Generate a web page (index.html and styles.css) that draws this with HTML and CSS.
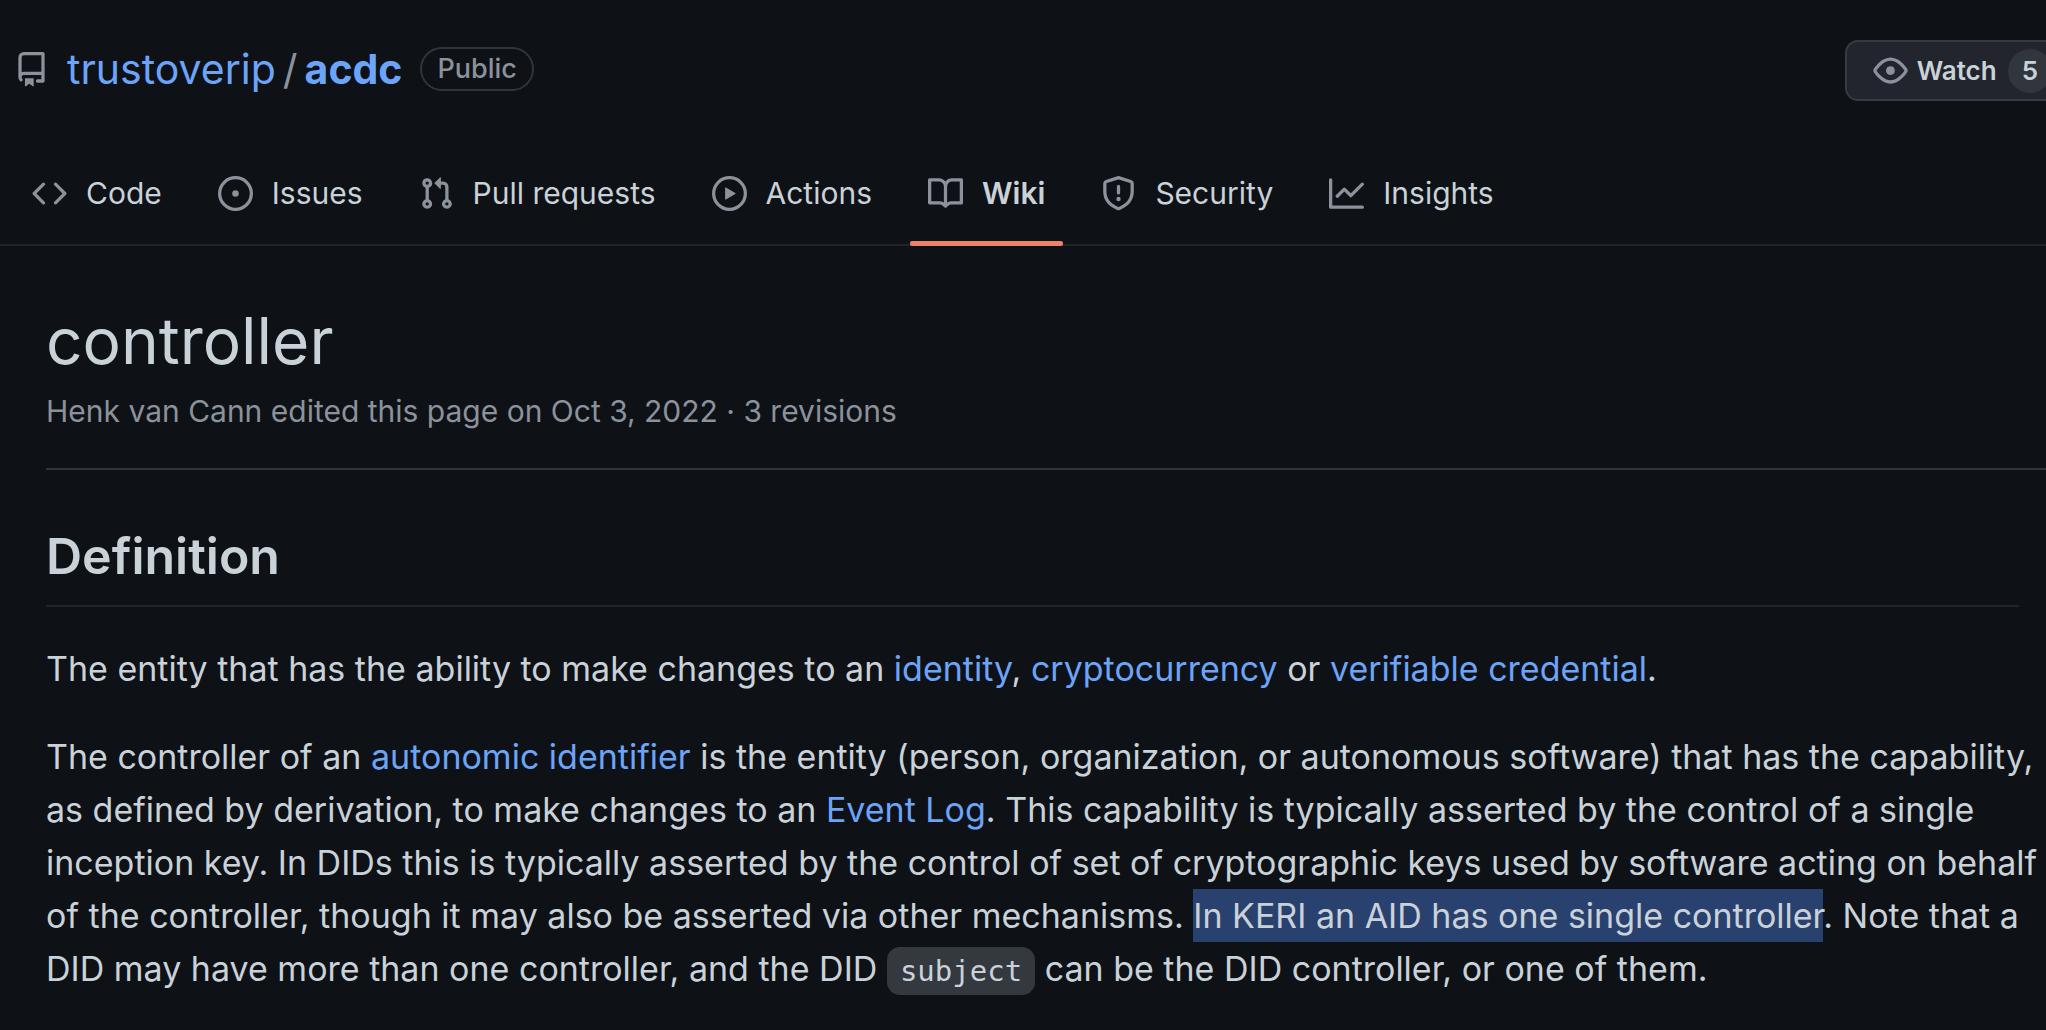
FILE: index.html
```html
<!DOCTYPE html>
<html lang="en">
<head>
<meta charset="utf-8">
<title>controller · trustoverip/acdc Wiki</title>
<link rel="stylesheet" href="styles.css">
</head>
<body>
<header class="repo-header">
  <div class="repo-title">
    <svg class="icon" viewBox="0 0 16 16" aria-hidden="true"><path d="M2 2.5A2.5 2.5 0 0 1 4.500 0h8.750a.75.75 0 0 1 .75.75v12.500a.75.75 0 0 1-.75.75h-2.500a.75.75 0 0 1 0-1.500h1.750v-2h-8a1 1 0 0 0-.714 1.700.75.75 0 1 1-1.072 1.050A2.495 2.495 0 0 1 2 11.500Zm10.500-1h-8a1 1 0 0 0-1 1v6.708A2.486 2.486 0 0 1 4.500 9h8ZM5 12.250a.25.25 0 0 1 .25-.25h3.500a.25.25 0 0 1 .25.25v3.250a.25.25 0 0 1-.4.200l-1.450-1.087a.249.249 0 0 0-.300 0L5.400 15.700a.25.25 0 0 1-.4-.200Z"/></svg>
    <h2 class="repo-name"><a href="#">trustoverip</a><span class="slash">/</span><a class="repo" href="#">acdc</a></h2>
    <span class="label">Public</span>
  </div>
  <button class="watch" type="button">
    <svg class="icon" viewBox="0 0 16 16" aria-hidden="true"><path d="M8 2c1.981 0 3.671.992 4.933 2.078 1.270 1.091 2.187 2.345 2.637 3.023a1.620 1.620 0 0 1 0 1.798c-.45.678-1.367 1.932-2.637 3.023C11.670 13.008 9.981 14 8 14c-1.981 0-3.671-.992-4.933-2.078C1.797 10.830.88 9.576.43 8.898a1.620 1.620 0 0 1 0-1.798c.45-.677 1.367-1.931 2.637-3.022C4.330 2.992 6.019 2 8 2ZM1.679 7.932a.12.12 0 0 0 0 .136c.411.622 1.241 1.750 2.366 2.717C5.176 11.758 6.527 12.500 8 12.500c1.473 0 2.825-.742 3.955-1.715 1.124-.967 1.954-2.096 2.366-2.717a.12.12 0 0 0 0-.136c-.412-.621-1.242-1.750-2.366-2.717C10.824 4.242 9.473 3.500 8 3.500c-1.473 0-2.825.742-3.955 1.715-1.124.967-1.954 2.096-2.366 2.717ZM8 10a2 2 0 1 1-.001-3.999A2 2 0 0 1 8 10Z"/></svg>
    <span>Watch</span>
    <span class="counter">5</span>
  </button>
</header>
<nav class="tabs" aria-label="Repository">
  <a class="tab" href="#"><svg class="icon" viewBox="0 0 16 16" aria-hidden="true"><path d="m11.280 3.220 4.250 4.250a.75.75 0 0 1 0 1.060l-4.250 4.250a.749.749 0 0 1-1.275-.326.749.749 0 0 1 .215-.734L13.940 8l-3.720-3.720a.749.749 0 0 1 .326-1.275.749.749 0 0 1 .734.215Zm-6.560 0a.751.751 0 0 1 1.042.018.751.751 0 0 1 .018 1.042L2.060 8l3.720 3.720a.749.749 0 0 1-.326 1.275.749.749 0 0 1-.734-.215L.47 8.530a.75.75 0 0 1 0-1.060Z"/></svg>Code</a>
  <a class="tab" href="#"><svg class="icon" viewBox="0 0 16 16" aria-hidden="true"><path d="M8 9.500a1.500 1.500 0 1 0 0-3 1.500 1.500 0 0 0 0 3Z"/><path d="M8 0a8 8 0 1 1 0 16A8 8 0 0 1 8 0ZM1.500 8a6.500 6.500 0 1 0 13 0 6.500 6.500 0 0 0-13 0Z"/></svg>Issues</a>
  <a class="tab" href="#"><svg class="icon" viewBox="0 0 16 16" aria-hidden="true"><path d="M1.500 3.250a2.250 2.250 0 1 1 3 2.122v5.256a2.251 2.251 0 1 1-1.500 0V5.372A2.250 2.250 0 0 1 1.500 3.250Zm5.677-.177L9.573.677A.25.25 0 0 1 10 .854V2.500h1A2.500 2.500 0 0 1 13.500 5v5.628a2.251 2.251 0 1 1-1.500 0V5a1 1 0 0 0-1-1h-1v1.646a.25.25 0 0 1-.427.177L7.177 3.427a.25.25 0 0 1 0-.354ZM3.750 2.500a.75.75 0 1 0 0 1.500.75.75 0 0 0 0-1.500Zm0 9.500a.75.75 0 1 0 0 1.500.75.75 0 0 0 0-1.500Zm8.250.75a.75.75 0 1 0 1.500 0 .75.75 0 0 0-1.500 0Z"/></svg>Pull requests</a>
  <a class="tab" href="#"><svg class="icon" viewBox="0 0 16 16" aria-hidden="true"><path d="M8 0a8 8 0 1 1 0 16A8 8 0 0 1 8 0ZM1.500 8a6.500 6.500 0 1 0 13 0 6.500 6.500 0 0 0-13 0Zm4.879-2.773 4.264 2.559a.25.25 0 0 1 0 .428l-4.264 2.559A.25.25 0 0 1 6 10.559V5.442a.25.25 0 0 1 .379-.215Z"/></svg>Actions</a>
  <a class="tab selected" href="#" aria-current="page"><svg class="icon" viewBox="0 0 16 16" aria-hidden="true"><path d="M0 1.750A.75.75 0 0 1 .75 1h4.253c1.227 0 2.317.59 3 1.501A3.743 3.743 0 0 1 11.006 1h4.245a.75.75 0 0 1 .75.75v10.500a.75.75 0 0 1-.75.75h-4.507a2.250 2.250 0 0 0-1.591.659l-.622.621a.75.75 0 0 1-1.060 0l-.622-.621A2.250 2.250 0 0 0 5.258 13H.75a.75.75 0 0 1-.75-.75Zm7.251 10.324.004-5.073-.002-2.253A2.250 2.250 0 0 0 5.003 2.500H1.500v9h3.757a3.750 3.750 0 0 1 1.994.574ZM8.755 4.750l-.004 7.322a3.752 3.752 0 0 1 1.992-.572H14.500v-9h-3.495a2.250 2.250 0 0 0-2.250 2.250Z"/></svg>Wiki</a>
  <a class="tab" href="#"><svg class="icon" viewBox="0 0 16 16" aria-hidden="true"><path d="M7.467.133a1.748 1.748 0 0 1 1.066 0l5.250 1.680A1.750 1.750 0 0 1 15 3.480V7c0 1.566-.32 3.182-1.303 4.682-.983 1.498-2.585 2.813-5.032 3.855a1.697 1.697 0 0 1-1.330 0c-2.447-1.042-4.049-2.357-5.032-3.855C1.320 10.182 1 8.566 1 7V3.480a1.750 1.750 0 0 1 1.217-1.667Zm.61 1.429a.25.25 0 0 0-.153 0l-5.250 1.680a.25.25 0 0 0-.174.238V7c0 1.358.275 2.666 1.057 3.860.784 1.194 2.121 2.340 4.366 3.297a.196.196 0 0 0 .154 0c2.245-.956 3.582-2.104 4.366-3.298C13.225 9.666 13.500 8.360 13.500 7V3.480a.251.251 0 0 0-.174-.237l-5.250-1.680ZM8.750 4.750v3a.75.75 0 0 1-1.500 0v-3a.75.75 0 0 1 1.500 0ZM9 10.500a1 1 0 1 1-2 0 1 1 0 0 1 2 0Z"/></svg>Security</a>
  <a class="tab" href="#"><svg class="icon" viewBox="0 0 16 16" aria-hidden="true"><path d="M1.500 1.750V13.500h13.750a.75.75 0 0 1 0 1.500H.75a.75.75 0 0 1-.75-.75V1.750a.75.75 0 0 1 1.500 0Zm14.280 2.530-5.250 5.250a.75.75 0 0 1-1.060 0L7 7.060 4.280 9.780a.751.751 0 0 1-1.042-.018.751.751 0 0 1-.018-1.042l3.250-3.250a.75.75 0 0 1 1.060 0L10 7.940l4.720-4.720a.751.751 0 0 1 1.042.018.751.751 0 0 1 .018 1.042Z"/></svg>Insights</a>
</nav>
<main class="wiki">
  <div class="page-head">
    <h1>controller</h1>
    <p class="meta">Henk van Cann edited this page on Oct 3, 2022 · 3 revisions</p>
  </div>
  <article class="body">
    <h2>Definition</h2>
    <p>The entity that has the ability to make changes to an <a href="#">identity</a>, <a href="#">cryptocurrency</a> or <a href="#">verifiable credential</a>.</p>
    <p>The controller of an <a href="#">autonomic identifier</a> is the entity (person, organization, or autonomous software) that has the capability, as defined by derivation, to make changes to an <a href="#">Event Log</a>. This capability is typically asserted by the control of a single inception key. In DIDs this is typically asserted by the control of set of cryptographic keys used by software acting on behalf of the controller, though it may also be asserted via other mechanisms. <mark>In KERI an AID has one single controller</mark>. Note that a DID may have more than one controller, and the DID <code>subject</code> can be the DID controller, or one of them.</p>
  </article>
</main>
</body>
</html>
```
FILE: styles.css
```css
* { box-sizing: border-box; }
body {
  margin: 0;
  background: #0e1116;
  color: #c9d1d9;
  font-family: Inter, "Liberation Sans", sans-serif;
  font-size: 34px;
  line-height: 53px;
  overflow-x: hidden;
}
a { color: #6ca4f8; text-decoration: none; }
h1, h2, p { margin: 0; }
.icon { width: 35px; height: 35px; fill: #8b929c; flex: none; }

.repo-header {
  display: flex;
  justify-content: space-between;
  align-items: center;
  padding: 40px 0 0 14px;
}
.repo-title { display: flex; align-items: center; padding-bottom: 2px; }
.repo-name {
  display: flex;
  gap: 7px;
  margin: 0 18px;
  font-size: 41px;
  font-weight: 400;
}
.slash { color: #8b929c; }
.repo { font-weight: 700; }
.label {
  margin-bottom: 2px;
  border: 2px solid #30343b;
  border-radius: 22px;
  padding: 0 15px;
  color: #8b929c;
  font-size: 27px;
  font-weight: 500;
  line-height: 40px;
}
.watch {
  display: flex;
  align-items: center;
  gap: 9px;
  height: 61px;
  margin-right: -6px;
  padding: 0 0 0 26px;
  background: #22252d;
  border: 2px solid #373a40;
  border-right: 0;
  border-radius: 13px 0 0 13px;
  color: #c9d1d9;
  font: 600 26px Inter, "Liberation Sans", sans-serif;
}
.counter {
  margin-left: 2px;
  padding: 0 14px;
  border-radius: 22px;
  background: #31353c;
  line-height: 44px;
}

.tabs {
  display: flex;
  gap: 20px;
  margin-top: 40px;
  padding: 0 14px;
  border-bottom: 2px solid #21252b;
}
.tab {
  position: relative;
  display: flex;
  align-items: center;
  gap: 19px;
  height: 103px;
  padding: 2px 18px 0;
  color: #c9d1d9;
  font-size: 30px;
}
.tab.selected { font-weight: 600; }
.tab.selected::after {
  content: "";
  position: absolute;
  right: 0;
  bottom: -2px;
  left: 0;
  height: 5px;
  border-radius: 2px;
  background: #ec8068;
}

.wiki { padding: 52px 0 36px 46px; }
.page-head { border-bottom: 2px solid #30343b; padding-bottom: 30px; }
h1 { margin-bottom: 2px; font-size: 64px; font-weight: 400; line-height: 85px; }
.meta { color: #8b929c; font-size: 30px; }
.body { margin-right: 27px; padding-top: 53px; }
.body h2 {
  padding-bottom: 16px;
  border-bottom: 2px solid #21252b;
  font-size: 50px;
  font-weight: 600;
  line-height: 66px;
}
.body p { margin: 35px -20px 0 0; }
mark { padding: 6px 0 6px; background: #29416f; color: inherit; }
code {
  padding: 7px 13px;
  border-radius: 13px;
  background: #34383f;
  font-family: "DejaVu Sans Mono", monospace;
  font-size: 29px;
  line-height: 1;
}
```
